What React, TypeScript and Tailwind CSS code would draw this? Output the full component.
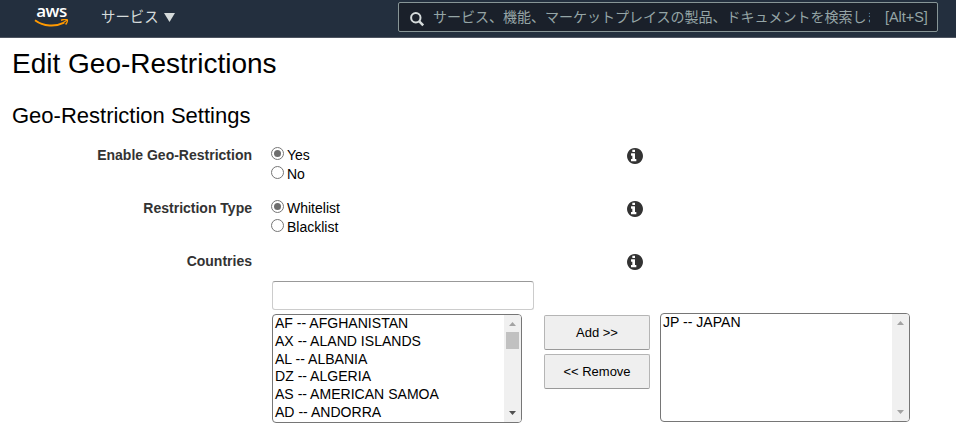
import React from "react";

const countries = [
  "AF -- AFGHANISTAN",
  "AX -- ALAND ISLANDS",
  "AL -- ALBANIA",
  "DZ -- ALGERIA",
  "AS -- AMERICAN SAMOA",
  "AD -- ANDORRA",
];

function AwsLogo() {
  return (
    <div className="ml-[34px] flex w-[35px] flex-col items-center pt-[2px]">
      <span className="h-[16px] font-['Open_Sans',sans-serif] text-[17px] leading-[17px] font-semibold tracking-[-0.5px] text-white">
        aws
      </span>
      <svg width="35" height="9" viewBox="0 0 35 9" className="mt-[1px]" fill="none">
        <path d="M1 1.2C9.5 7.6 21.5 8 30.2 3.7" stroke="#f90" strokeWidth="1.9" />
        <path d="M27 1.2C29.5.5 32.6.3 33.2.9c.5.7-.4 3.2-1.6 4.6" stroke="#f90" strokeWidth="1.5" />
        <path d="M29.5 3.6L33 1" stroke="#f90" strokeWidth="1.2" />
      </svg>
    </div>
  );
}

function InfoIcon() {
  return (
    <svg width="16" height="16" viewBox="128 128 1536 1536" className="mt-[0.5px]" fill="#333">
      <path d="M1024 1376v-160q0-14-9-23t-23-9h-96v-512q0-14-9-23t-23-9h-320q-14 0-23 9t-9 23v160q0 14 9 23t23 9h96v320h-96q-14 0-23 9t-9 23v160q0 14 9 23t23 9h448q14 0 23-9t9-23zM896 480v-160q0-14-9-23t-23-9h-192q-14 0-23 9t-9 23v160q0 14 9 23t23 9h192q14 0 23-9t9-23zM1664 896q0 209-103 385.5t-279.5 279.5-385.5 103-385.5-103-279.5-279.5-103-385.5 103-385.5 279.5-279.5 385.5-103 385.5 103 279.5 279.5 103 385.5z" />
    </svg>
  );
}

function Header() {
  return (
    <header className="flex h-[38px] items-start border-b border-[#4d5460] bg-[#232f3e] font-['Liberation_Sans','Noto_Sans_CJK_JP',sans-serif]">
      <AwsLogo />
      <div className="ml-[32px] flex h-[34px] items-center text-[14.4px] text-[#d5dbdb]">
        <span className="mt-[2px] w-[58px] whitespace-nowrap">サービス</span>
        <svg width="11" height="9" viewBox="0 0 11 9" className="ml-[5px]" fill="currentColor">
          <path d="M0 0h11L5.5 9z" />
        </svg>
      </div>
      <div className="mt-[2px] mr-[18px] ml-auto flex h-[30px] w-[540px] items-center rounded-[2px] border border-[#879596] bg-[#1a202a] text-[14px] text-[#95a5a6]">
        <svg width="15" height="15" viewBox="0 0 15 15" className="mt-[4px] ml-[11px] shrink-0" fill="none" stroke="#d5dbdb">
          <circle cx="5.8" cy="5.8" r="4.7" strokeWidth="2" />
          <path d="M9.3 9.3l3.9 4" strokeWidth="2.5" />
        </svg>
        <span className="ml-[8px] w-[437px] shrink-0 overflow-hidden whitespace-nowrap">
          サービス、機能、マーケットプレイスの製品、ドキュメントを検索しま
        </span>
        <span className="mt-[1px] ml-[15px] text-[14.4px] whitespace-nowrap">[Alt+S]</span>
      </div>
    </header>
  );
}

function Radio({ checked = false, label }: { checked?: boolean; label: string }) {
  return (
    <div className="flex h-[19px] items-start">
      <span className="flex size-[13px] items-center justify-center rounded-full border border-[#767676] bg-white">
        {checked && <span className="size-[7px] shrink-0 rounded-full bg-[#6e6e6e]" />}
      </span>
      <span className="ml-[3px] text-[14px] leading-[17px]">{label}</span>
    </div>
  );
}

function Row({ label, children }: { label: string; children?: React.ReactNode }) {
  return (
    <div className="flex h-[53px] items-start">
      <div className="w-[252px] text-right text-[14px] leading-[16px] font-bold text-[#333]">{label}</div>
      <div className="ml-[19px] w-[356px]">{children}</div>
      <InfoIcon />
    </div>
  );
}

function ListBox({ items, thumb = false }: { items: string[]; thumb?: boolean }) {
  return (
    <div className="flex h-[109px] w-[250px] overflow-hidden rounded-[4px] border border-[#767676] bg-white">
      <ul className="flex-1 pl-[2px] text-[14.06px] leading-[17.75px] whitespace-nowrap">
        {items.map((item) => (
          <li key={item}>{item}</li>
        ))}
      </ul>
      <div className="flex w-[17px] flex-col items-center bg-[#f0f0f0] pt-[7px] pb-[7px]">
        <svg width="7" height="4" viewBox="0 0 7 4" fill="#a3a3a3">
          <path d="M0 4L3.5 0 7 4z" />
        </svg>
        {thumb && <div className="mt-[6px] h-[17px] w-[13px] bg-[#c1c1c1]" />}
        <svg width="7" height="4" viewBox="0 0 7 4" className="mt-auto" fill={thumb ? "#505050" : "#a3a3a3"}>
          <path d="M0 0h7L3.5 4z" />
        </svg>
      </div>
    </div>
  );
}

function PushButton({ children }: { children: React.ReactNode }) {
  return (
    <button className="h-[35px] w-[106px] rounded-[2px] border border-[#b5b5b5] border-b-[#999] bg-[#efefef] text-[13px]">
      {children}
    </button>
  );
}

export default function App() {
  return (
    <div className="h-[437px] w-[956px] overflow-hidden bg-white font-['Liberation_Sans',Arial,sans-serif] text-black">
      <Header />
      <main>
        <h1 className="mt-[10px] ml-[12px] text-[28px] leading-[32px]">Edit Geo-Restrictions</h1>
        <h2 className="mt-[23px] ml-[12px] text-[22px] leading-[26px]">Geo-Restriction Settings</h2>
        <div className="mt-[18px]">
          <Row label="Enable Geo-Restriction">
            <Radio checked label="Yes" />
            <Radio label="No" />
          </Row>
          <Row label="Restriction Type">
            <Radio checked label="Whitelist" />
            <Radio label="Blacklist" />
          </Row>
          <Row label="Countries" />
        </div>
        <div className="-mt-[25px] ml-[272px]">
          <input
            type="text"
            className="block h-[29px] w-[262px] rounded-[3px] border border-[#ccc] border-t-[#999] px-2 text-[14px] outline-none"
          />
          <div className="mt-[3px] flex items-start">
            <div className="mt-[1px]">
              <ListBox items={countries} thumb />
            </div>
            <div className="mt-[2px] ml-[22px] flex flex-col gap-[4px]">
              <PushButton>Add &gt;&gt;</PushButton>
              <PushButton>&lt;&lt; Remove</PushButton>
            </div>
            <div className="ml-[10px]">
              <ListBox items={["JP -- JAPAN"]} />
            </div>
          </div>
        </div>
      </main>
    </div>
  );
}
